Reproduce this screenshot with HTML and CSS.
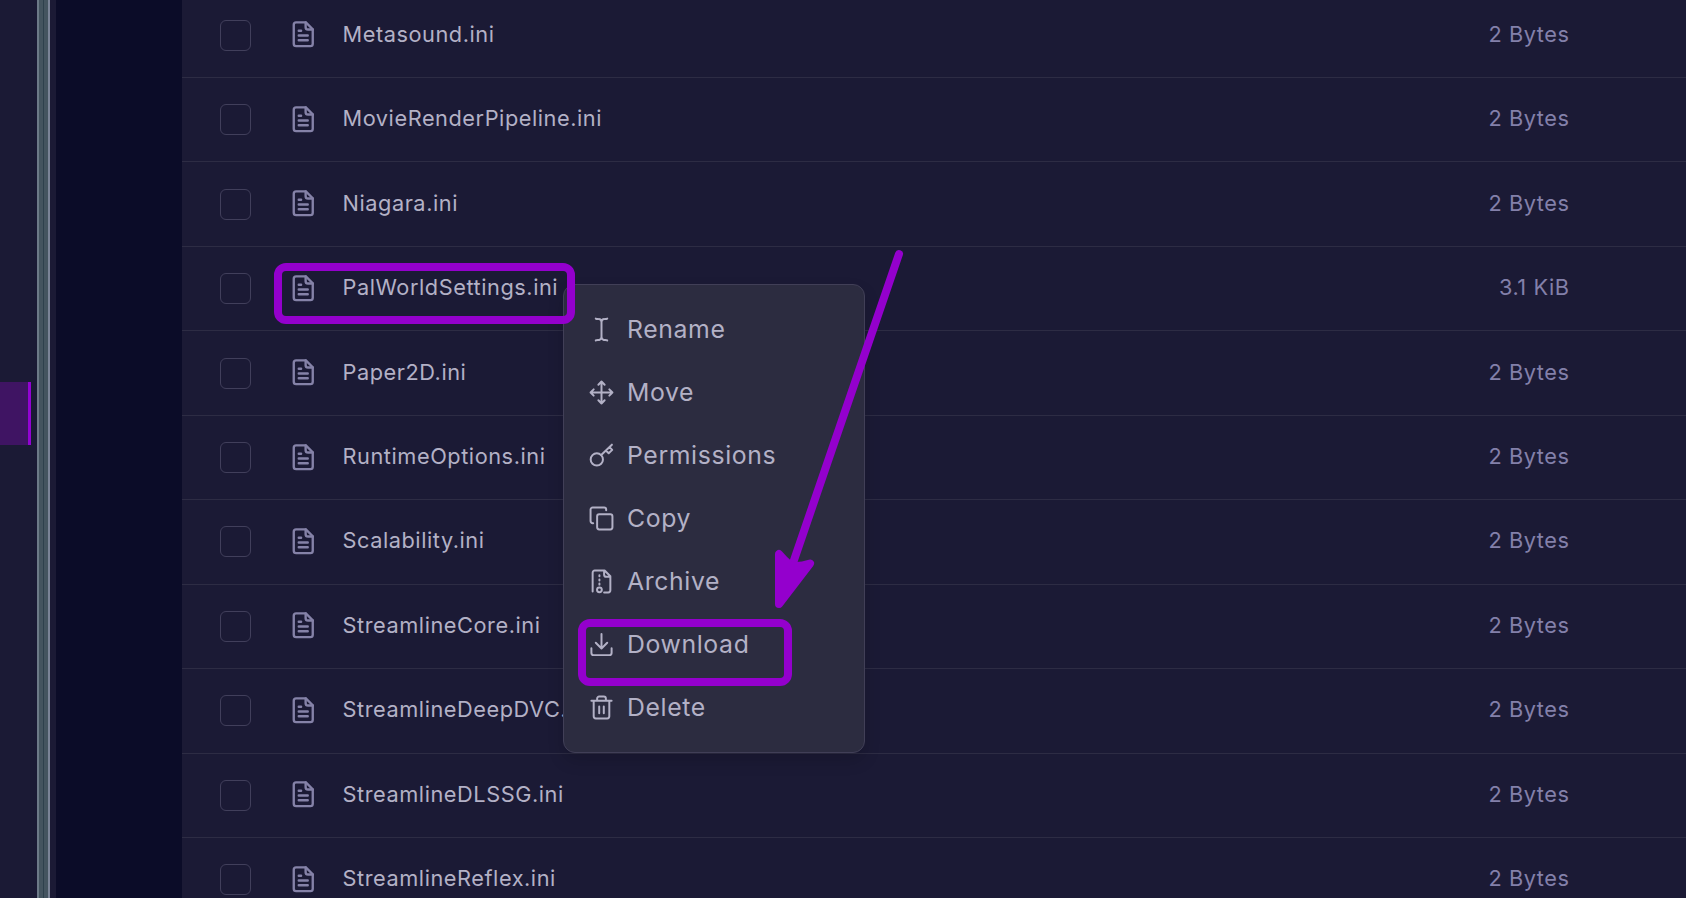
FILE: index.html
```
<!DOCTYPE html>
<html lang="en">
<head>
    <meta charset="UTF-8">
    <title>File Manager</title>
    <link rel="stylesheet" href="styles.css">
</head>
<body>
    <svg class="sprite" aria-hidden="true">
        <symbol id="file" viewBox="0 0 24 24">
            <path d="M14.2 2H6a2 2 0 0 0-2 2v16a2 2 0 0 0 2 2h12a2 2 0 0 0 2-2V7.8L14.2 2z"/>
            <path d="M14 2v4a2 2 0 0 0 2 2h4M8.2 9h2M8.2 13h7.6M8.2 17h7.6"/>
        </symbol>
    </svg>

    <div class="page">
        <nav class="sidebar">
            <a class="active" aria-label="Files"></a>
        </nav>
        <div class="scrollbar"></div>
        <div class="gutter"></div>

        <main class="files">
            <div class="row"><span class="check"></span><svg class="file-icon"><use href="#file"/></svg><span class="name">Metasound.ini</span><span class="size">2 Bytes</span></div>
            <div class="row"><span class="check"></span><svg class="file-icon"><use href="#file"/></svg><span class="name">MovieRenderPipeline.ini</span><span class="size">2 Bytes</span></div>
            <div class="row"><span class="check"></span><svg class="file-icon"><use href="#file"/></svg><span class="name">Niagara.ini</span><span class="size">2 Bytes</span></div>
            <div class="row"><span class="check"></span><svg class="file-icon"><use href="#file"/></svg><span class="name">PalWorldSettings.ini</span><span class="size">3.1 KiB</span></div>
            <div class="row"><span class="check"></span><svg class="file-icon"><use href="#file"/></svg><span class="name">Paper2D.ini</span><span class="size">2 Bytes</span></div>
            <div class="row"><span class="check"></span><svg class="file-icon"><use href="#file"/></svg><span class="name">RuntimeOptions.ini</span><span class="size">2 Bytes</span></div>
            <div class="row"><span class="check"></span><svg class="file-icon"><use href="#file"/></svg><span class="name">Scalability.ini</span><span class="size">2 Bytes</span></div>
            <div class="row"><span class="check"></span><svg class="file-icon"><use href="#file"/></svg><span class="name">StreamlineCore.ini</span><span class="size">2 Bytes</span></div>
            <div class="row"><span class="check"></span><svg class="file-icon"><use href="#file"/></svg><span class="name">StreamlineDeepDVC.ini</span><span class="size">2 Bytes</span></div>
            <div class="row"><span class="check"></span><svg class="file-icon"><use href="#file"/></svg><span class="name">StreamlineDLSSG.ini</span><span class="size">2 Bytes</span></div>
            <div class="row"><span class="check"></span><svg class="file-icon"><use href="#file"/></svg><span class="name">StreamlineReflex.ini</span><span class="size">2 Bytes</span></div>
        </main>
    </div>

    <div class="menu">
        <div class="item">
            <svg viewBox="0 0 24 24"><path d="M6.5 1.5c1 .6 2.2.2 3.3.5 1.3.3 2.2 1.3 2.2 2.7v14.600c0 1.400-.9 2.400-2.200 2.700-1.100.3-2.300-.1-3.300.5M17.500 1.500c-1 .6-2.200.2-3.300.5-1.300.3-2.200 1.300-2.200 2.700M12 19.300c0 1.400.9 2.400 2.200 2.700 1.100.3 2.300-.1 3.300.5"/></svg>
            <span>Rename</span>
        </div>
        <div class="item">
            <svg viewBox="0 0 24 24"><path d="M12 1.500v21M1.500 12h21M9 4.500l3-3 3 3M9 19.500l3 3 3-3M4.500 9l-3 3 3 3M19.500 9l3 3-3 3"/></svg>
            <span>Move</span>
        </div>
        <div class="item">
            <svg viewBox="0 0 24 24"><circle cx="7.5" cy="15.8" r="5.9"/><path d="M11.700 11.600L22 1.600M16.200 7.200l2.700 2.700 3.400-3.300-2.600-2.700"/></svg>
            <span>Permissions</span>
        </div>
        <div class="item">
            <svg viewBox="0 0 24 24"><rect x="7.8" y="8" width="14.7" height="14.5" rx="2"/><path d="M4 16.500H3.500a2 2 0 0 1-2-2v-11a2 2 0 0 1 2-2h11a2 2 0 0 1 2 2V4"/></svg>
            <span>Copy</span>
        </div>
        <div class="item">
            <svg viewBox="0 0 24 24"><path d="M3.500 21.500v-18a2 2 0 0 1 2-2H15l5.500 5.500v13.500a2 2 0 0 1-2 2h-4M14.500 1.500V5.500a2 2 0 0 0 2 2h4M10 6v1M10 10v1M10 14v1"/><circle cx="10" cy="20" r="2.3"/></svg>
            <span>Archive</span>
        </div>
        <div class="item">
            <svg viewBox="0 0 24 24"><path d="M12 2v13.500M6.500 10.300l5.500 5.500 5.500-5.500M2.300 15.500v4.700a2 2 0 0 0 2 2h15.400a2 2 0 0 0 2-2v-4.700"/></svg>
            <span>Download</span>
        </div>
        <div class="item">
            <svg viewBox="0 0 24 24"><path d="M2.300 5.500h19.400M4.500 5.500v15a2 2 0 0 0 2 2h11a2 2 0 0 0 2-2v-15M7.800 5.300V3.500a2 2 0 0 1 2-2h4.400a2 2 0 0 1 2 2v1.800M9.800 11v6.500M14.200 11v6.500"/></svg>
            <span>Delete</span>
        </div>
    </div>

    <!-- highlights -->
    <div class="mark mark-file"></div>
    <div class="mark mark-download"></div>
    <svg class="arrow" viewBox="0 0 140 370">
        <path class="shaft" d="M129 14L22 326"/>
        <path class="head" d="M9 314v50l31-40.500q-13 4-20 1.500-5-4-11-11z"/>
    </svg>
</body>
</html>
```
FILE: styles.css
```
* {
    margin: 0;
    padding: 0;
    box-sizing: border-box;
}

body {
    font-family: 'Inter', sans-serif;
    background-color: #1b1a35;
    color: #b3b1c6;
    height: 100vh;
    overflow: hidden;
    position: relative;
}

.sprite {
    display: none;
}

.page {
    display: flex;
    height: 898px;
    overflow: hidden;
}

.sidebar {
    width: 37px;
    padding-top: 382px;
}

.active {
    display: block;
    width: 31px;
    height: 63px;
    background-color: #3f1463;
    border-right: 3px solid #9303d3;
}

.scrollbar {
    width: 13px;
    background: linear-gradient(to right, #6d7a88 0 2px, #44545f 2px 6px, #2e404c 6px 7px, #44545f 7px 11px, #7b8497 11px 13px);
}

.gutter {
    width: 132px;
    border-left: 6px solid #1b1a35;
    background-color: #0b0c28;
}

.files {
    flex: 1;
    margin-top: -6.4px;
}

.row {
    display: flex;
    align-items: center;
    height: 84.44px;
    padding: 0 116.5px 0 38px;
    border-bottom: 1px solid #2d2c44;
    font-size: 21.75px;
    letter-spacing: 0.025em;
}

.check {
    width: 31px;
    height: 31px;
    border: 1px solid #413f5b;
    border-radius: 6px;
}

.file-icon {
    width: 28.5px;
    height: 28.5px;
    margin: 0 25px 1.5px 38px;
    fill: none;
    stroke: #8582a8;
    stroke-width: 2;
    stroke-linecap: round;
    stroke-linejoin: round;
}

.name {
    flex: 1;
    padding-bottom: 3px;
}

.size {
    padding-bottom: 3px;
    color: #8380aa;
}

.menu {
    position: absolute;
    left: 563px;
    top: 284px;
    width: 302px;
    height: 469px;
    padding: 13px 25px;
    background-color: #2c2c40;
    border: 1px solid #413f57;
    border-radius: 12px;
    box-shadow: 0 8px 16px rgba(0, 0, 0, 0.15);
}

.item {
    display: flex;
    align-items: center;
    gap: 13px;
    height: 63px;
    font-size: 24.8px;
    letter-spacing: 0.025em;
}

.item span {
    padding-bottom: 2px;
}

.item svg {
    width: 25px;
    height: 25px;
    fill: none;
    stroke: #b3b1c6;
    stroke-width: 1.9;
    stroke-linecap: round;
    stroke-linejoin: round;
}

.mark {
    position: absolute;
    border: 8px solid #9400cd;
    border-radius: 12px;
}

.mark-file {
    left: 274px;
    top: 263px;
    width: 301px;
    height: 61px;
}

.mark-download {
    left: 578px;
    top: 619px;
    width: 214px;
    height: 67px;
}

.arrow {
    position: absolute;
    left: 770px;
    top: 240px;
    width: 140px;
    height: 370px;
    fill: none;
    stroke: #9400cd;
    stroke-width: 8;
    stroke-linecap: round;
    stroke-linejoin: round;
}

.head {
    fill: #9400cd;
}
```
